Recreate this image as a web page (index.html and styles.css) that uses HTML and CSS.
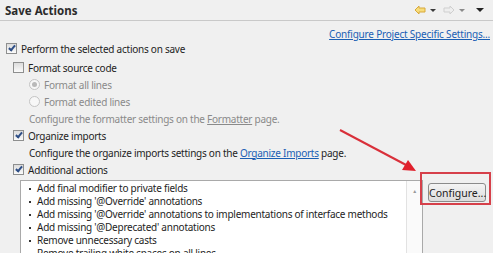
FILE: index.html
```html
<!DOCTYPE html>
<html lang="en">
<head>
  <meta charset="UTF-8">
  <title>Save Actions</title>
  <link rel="stylesheet" href="styles.css">
</head>
<body>
  <div class="page">
    <!-- Title bar -->
    <div class="title-bar">
      <span class="title">Save Actions</span>
      <div class="nav">
        <svg width="12" height="10" viewBox="0 0 12 10"><path d="M1 5 L5 1 L5 3 L11 3 L11 7 L5 7 L5 9 Z" fill="#f7dc7a" stroke="#d8a93a" stroke-width="1"/></svg>
        <span class="drop"></span>
        <svg width="12" height="10" viewBox="0 0 12 10"><path d="M11 5 L7 1 L7 3 L1 3 L1 7 L7 7 L7 9 Z" fill="#eeeeee" stroke="#cfcfcf" stroke-width="1"/></svg>
        <span class="drop light"></span>
        <span class="drop dark"></span>
      </div>
    </div>

    <div class="project-link"><a href="#">Configure Project Specific Settings...</a></div>

    <div class="row top"><span class="cb checked"></span><span>Perform the selected actions on save</span></div>
    <div class="group">
      <div class="row"><span class="cb"></span><span>Format source code</span></div>
      <div class="sub">
        <div class="row disabled"><span class="radio on"></span><span>Format all lines</span></div>
        <div class="row disabled"><span class="radio"></span><span>Format edited lines</span></div>
        <div class="row disabled"><span>Configure the formatter settings on the <a href="#" class="muted">Formatter</a> page.</span></div>
      </div>
      <div class="row"><span class="cb checked"></span><span>Organize imports</span></div>
      <div class="sub">
        <div class="row"><span>Configure the organize imports settings on the <a href="#">Organize Imports</a> page.</span></div>
      </div>
      <div class="row"><span class="cb checked"></span><span>Additional actions</span></div>

      <div class="actions">
        <div class="list-box">
          <ul class="list">
            <li>Add final modifier to private fields</li>
            <li>Add missing '@Override' annotations</li>
            <li>Add missing '@Override' annotations to implementations of interface methods</li>
            <li>Add missing '@Deprecated' annotations</li>
            <li>Remove unnecessary casts</li>
            <li>Remove trailing white spaces on all lines</li>
          </ul>
          <div class="scrollbar"><span class="up">&#9650;</span></div>
        </div>
        <div class="side">
          <button class="configure">Configure...</button>
        </div>
      </div>
    </div>

    <!-- red annotation -->
    <div class="mark"></div>
    <svg class="arrow" width="90" height="50" viewBox="0 0 90 50">
      <line x1="2" y1="2" x2="70" y2="38" stroke="#d9303a" stroke-width="2"/>
      <path d="M78 43 L64 42 L70 32 Z" fill="#e0202c"/>
    </svg>
  </div>
</body>
</html>
```

FILE: styles.css
```css
body {
  margin: 0;
  background: #f0f0f0;
  font-family: "Noto Sans", "Open Sans", sans-serif;
  font-size: 10px;
  letter-spacing: -0.25px;
  color: #1e1e1e;
  overflow: hidden;
}

.page {
  position: relative;
  width: 493px;
  height: 253px;
}

a {
  color: #1a5fb4;
  text-decoration: underline;
}

a.muted {
  color: #8a8a8a;
}

/* title */
.title-bar {
  height: 20px;
  display: flex;
  justify-content: space-between;
  align-items: center;
  padding: 0 6px 0 5px;
  border-bottom: 1px solid #c9c9c9;
}

.title {
  font-weight: bold;
  font-size: 11.5px;
  letter-spacing: 0;
  color: #2b2b2b;
}

.nav {
  display: flex;
  align-items: center;
  gap: 4px;
}

.drop {
  width: 0;
  height: 0;
  border-left: 3px solid transparent;
  border-right: 3px solid transparent;
  border-top: 3px solid #3a3a3a;
  margin-right: 3px;
}

.drop.light {
  border-top-color: #8a8a8a;
}

.drop.dark {
  border-left-width: 4px;
  border-right-width: 4px;
  border-top-width: 4px;
  border-top-color: #222;
  margin-left: 4px;
}

.project-link {
  text-align: right;
  padding: 6px 3px 0 0;
  height: 13px;
  letter-spacing: -0.2px;
}

/* rows */
.row {
  display: flex;
  align-items: center;
  height: 17px;
  white-space: nowrap;
}

.row.top {
  padding-left: 6px;
}

.row.disabled {
  color: #8a8a8a;
}

.group {
  padding-left: 13px;
  margin-top: 2px;
}

.sub {
  padding-left: 16px;
}

.cb {
  width: 9px;
  height: 9px;
  border: 1px solid #8e8f8f;
  background: linear-gradient(#dcdcdc, #fbfbfb);
  margin-right: 4px;
  position: relative;
  flex: none;
}

.cb.checked::after {
  content: "";
  position: absolute;
  left: 3px;
  top: 0;
  width: 2px;
  height: 5px;
  border: solid #2e4e86;
  border-width: 0 2px 2px 0;
  transform: rotate(40deg);
}

.radio {
  width: 9px;
  height: 9px;
  border: 1px solid #c4c4c4;
  border-radius: 50%;
  background: #f7f7f7;
  margin-right: 4px;
  position: relative;
  flex: none;
}

.radio.on::after {
  content: "";
  position: absolute;
  left: 2px;
  top: 2px;
  width: 5px;
  height: 5px;
  border-radius: 50%;
  background: #b9b9b9;
}

/* additional actions */
.actions {
  display: flex;
  align-items: flex-start;
  margin-top: 2px;
}

.list-box {
  margin-left: 7px;
  width: 401px;
  height: 80px;
  background: #fff;
  border: 1px solid #a9a9a9;
  display: flex;
  overflow: hidden;
}

.list {
  flex: 1;
  margin: 0;
  padding: 1px 0 0 16px;
  list-style: none;
}

.list li {
  height: 13px;
  line-height: 13px;
  position: relative;
  white-space: nowrap;
}

.list li::before {
  content: "";
  position: absolute;
  left: -8px;
  top: 6px;
  width: 2px;
  height: 2px;
  background: #333;
}

.scrollbar {
  width: 15px;
  border-left: 1px solid #e2e2e2;
  background: #fafafa;
  text-align: center;
}

.up {
  font-size: 5px;
  color: #999;
  position: relative;
  top: 1px;
}

.side {
  padding: 3px 0 0 5px;
}

.configure {
  font-family: "Noto Sans", "Open Sans", sans-serif;
  font-size: 10.5px;
  color: #222;
  height: 19px;
  width: 58px;
  padding: 0;
  border: 1px solid #8b8b8b;
  border-radius: 3px;
  background: linear-gradient(#f4f4f4, #dcdcdc);
}

/* annotation overlay */
.mark {
  position: absolute;
  left: 420px;
  top: 172px;
  width: 67px;
  height: 29px;
  border: 2px solid #d6404a;
}

.arrow {
  position: absolute;
  left: 338px;
  top: 128px;
}
```
